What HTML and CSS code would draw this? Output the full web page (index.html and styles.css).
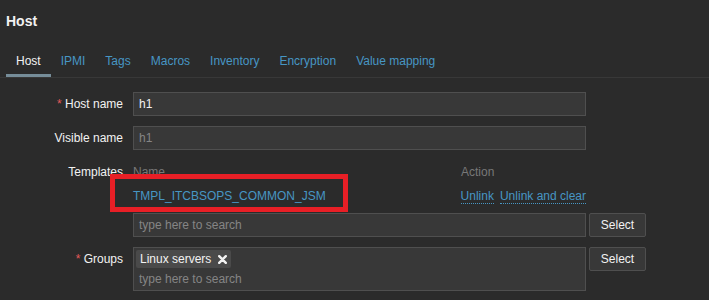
FILE: index.html
```html
<!DOCTYPE html>
<html lang="en">
<head>
  <meta charset="UTF-8">
  <meta name="viewport" content="width=device-width, initial-scale=1.0">
  <title>Host</title>
  <link rel="stylesheet" href="styles.css">
</head>

<body>
  <h1 class="page-title">Host</h1>

  <ul class="tabs">
    <li class="active"><a>Host</a></li>
    <li><a>IPMI</a></li>
    <li><a>Tags</a></li>
    <li><a>Macros</a></li>
    <li><a>Inventory</a></li>
    <li><a>Encryption</a></li>
    <li><a>Value mapping</a></li>
  </ul>

  <div class="form">
    <div class="row">
      <label class="label"><span class="req">*</span> Host name</label>
      <div class="field"><input type="text" class="text-input" value="h1"></div>
    </div>

    <div class="row">
      <label class="label">Visible name</label>
      <div class="field"><input type="text" class="text-input" placeholder="h1"></div>
    </div>

    <div class="row">
      <label class="label">Templates</label>
      <div class="field">
        <div class="templates">
          <div class="tpl-head">
            <span class="col-name">Name</span>
            <span class="col-action">Action</span>
          </div>
          <div class="tpl-row">
            <span class="col-name"><a class="link">TMPL_ITCBSOPS_COMMON_JSM</a></span>
            <span class="col-action">
              <a class="link dotted">Unlink</a><a class="link dotted">Unlink and clear</a>
            </span>
          </div>
          <div class="highlight"></div>
        </div>
        <div class="ms-line">
          <div class="ms-box single">
            <span class="placeholder">type here to search</span>
          </div>
          <button class="btn">Select</button>
        </div>
      </div>
    </div>

    <div class="row">
      <label class="label"><span class="req">*</span> Groups</label>
      <div class="field">
        <div class="ms-line">
          <div class="ms-box">
            <div class="tag">
              <span>Linux servers</span>
              <svg class="tag-x" width="9" height="9" viewBox="0 0 9 9">
                <path d="M1.2 1.2 L7.8 7.8 M7.8 1.2 L1.2 7.8" stroke="#f2f2f2" stroke-width="2.4" stroke-linecap="round"/>
              </svg>
            </div>
            <span class="placeholder multi">type here to search</span>
          </div>
          <button class="btn">Select</button>
        </div>
      </div>
    </div>
  </div>
</body>
</html>
```

FILE: styles.css
```css
body {
  margin: 0;
  background-color: #2b2b2b;
  color: #f2f2f2;
  font-family: "Liberation Sans", Arial, sans-serif;
  font-size: 12px;
}

.page-title {
  margin: 0;
  padding: 12px 6px 24px;
  font-size: 14px;
  line-height: 18px;
  font-weight: bold;
  color: #f2f2f2;
}

.tabs {
  display: flex;
  list-style: none;
  margin: 0;
  padding: 0 0 0 6px;
  border-bottom: 1px solid #383838;
}

.tabs li a {
  display: block;
  padding: 0 10px 6px;
  line-height: 14px;
  color: #4796c4;
  border-bottom: 3px solid transparent;
}

.tabs li.active a {
  color: #f2f2f2;
  border-bottom-color: #768d99;
}

.form {
  padding-top: 14px;
}

.row {
  display: flex;
  align-items: flex-start;
  margin-bottom: 10px;
}

.label {
  width: 123px;
  padding-right: 10px;
  text-align: right;
  line-height: 24px;
  color: #f2f2f2;
}

.req {
  color: #e45959;
}

.text-input {
  box-sizing: border-box;
  width: 453px;
  height: 24px;
  margin: 0;
  padding: 0 5px;
  background-color: #383838;
  border: 1px solid #4f4f4f;
  color: #f2f2f2;
  font-family: "Liberation Sans", Arial, sans-serif;
  font-size: 12px;
  outline: none;
}

.text-input::placeholder {
  color: #858585;
}

/* templates table */
.templates {
  position: relative;
  width: 453px;
}

.tpl-head, .tpl-row {
  display: flex;
  line-height: 24px;
}

.col-name {
  width: 328px;
}

.col-action {
  flex: 1;
  white-space: nowrap;
}

.tpl-head {
  color: #787878;
}

.link {
  color: #4796c4;
}

.dotted {
  border-bottom: 1px dotted #4796c4;
}

.dotted + .dotted {
  margin-left: 6px;
}

.highlight {
  position: absolute;
  left: -23px;
  top: 14px;
  width: 238px;
  height: 38px;
  box-sizing: border-box;
  border: 5px solid #e81f26;
}

/* multiselect */
.ms-line {
  display: flex;
  align-items: flex-start;
  margin-top: 5px;
}

.row:last-child .ms-line {
  margin-top: 0;
}

.ms-box {
  box-sizing: border-box;
  width: 453px;
  padding: 2px;
  background-color: #383838;
  border: 1px solid #4f4f4f;
}

.ms-box.single {
  height: 24px;
  padding: 0 5px;
  line-height: 22px;
}

.placeholder {
  color: #858585;
}

.placeholder.multi {
  display: block;
  padding: 2px 0 0 3px;
  line-height: 18px;
}

.tag {
  display: inline-flex;
  align-items: center;
  height: 18px;
  padding: 0 4px 0 4px;
  background-color: #4a4a4a;
  border-radius: 2px;
  color: #f2f2f2;
}

.tag-x {
  margin-left: 7px;
}

.btn {
  box-sizing: border-box;
  width: 57px;
  height: 24px;
  margin-left: 3px;
  padding: 0;
  background-color: #383838;
  border: 1px solid #4f4f4f;
  border-radius: 2px;
  color: #f2f2f2;
  font-family: "Liberation Sans", Arial, sans-serif;
  font-size: 12px;
}
```
